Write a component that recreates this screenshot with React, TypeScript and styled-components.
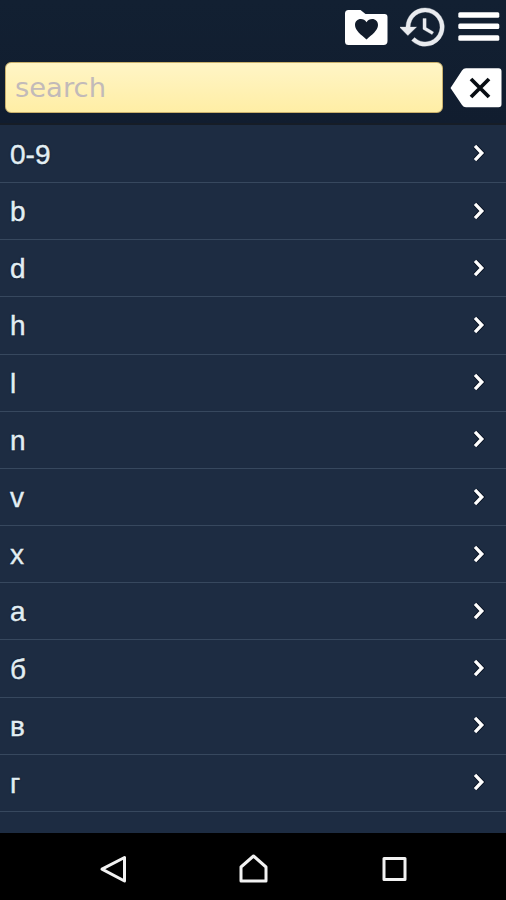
import React from "react";
import styled, { createGlobalStyle } from "styled-components";

const GlobalStyle = createGlobalStyle`
  * { box-sizing: border-box; }
  html, body, #root { height: 100%; }
  body { margin: 0; background: #000; overflow: hidden; }
  button { border: 0; padding: 0; background: none; display: block; color: inherit; }
  svg { display: block; }
`;

const Screen = styled.div`
  width: 100%;
  height: 900px;
  display: flex;
  flex-direction: column;
  background: #1d2c42;
  font-family: "Liberation Sans", Arial, sans-serif;
`;

const Header = styled.header`
  flex: none;
  height: 125px;
  background: linear-gradient(#122032, #111d2f);
  border-bottom: 2px solid #161d27;
`;

const Toolbar = styled.div`
  height: 62px;
  display: flex;
  justify-content: flex-end;
  align-items: flex-start;
  padding: 5px 5px 0 0;
  gap: 10px;
`;

const IconButton = styled.button<{ $width: number }>`
  width: ${(p) => p.$width}px;
  height: 46px;
`;

const SearchRow = styled.div`
  display: flex;
  align-items: center;
  padding: 0 4px 0 5px;
  gap: 7px;
`;

const SearchInput = styled.input`
  flex: 1;
  min-width: 0;
  height: 51px;
  border: 1px solid #c9b06c;
  border-radius: 6px;
  padding: 0 9px 1px;
  outline: none;
  background: linear-gradient(#fff5c6, #ffeea5);
  color: #333;
  font: 27.4px "DejaVu Sans", Verdana, sans-serif;
  &::placeholder { color: #c2bab9; opacity: 1; }
`;

const List = styled.ul`
  flex: 1;
  min-height: 0;
  margin: 0;
  padding: 0.8px 0 0;
  list-style: none;
  overflow: hidden;
`;

const Row = styled.li`
  height: 57.2px;
  display: flex;
  justify-content: space-between;
  align-items: center;
  padding: 0 20px 1px 10px;
  border-bottom: 1px solid #37485e;
  color: #e2eef3;
  font-size: 28px;
  line-height: 31px;
  -webkit-text-stroke: 0.4px #e2eef3;
  text-shadow: 0 0 2px #071020;
`;

const Label = styled.span`
  padding-top: 2px;
`;

const NavBar = styled.nav`
  flex: none;
  height: 67px;
  display: flex;
  justify-content: center;
  align-items: center;
  gap: 110px;
  padding: 4px 0 0 1px;
  background: #000;
  color: #f2f2f2;
`;

const entries = ["0-9", "b", "d", "h", "l", "n", "v", "x", "а", "б", "в", "г"];

const FavoritesIcon = () => (
  <svg width="44" height="46" viewBox="0 0 44 46" overflow="visible">
    <g transform="translate(-1.500)">
      <path fill="#fff" d="M4 5h12l5 4h19a3 3 0 0 1 3 3v24a4 4 0 0 1-4 4H4a3.500 3.500 0 0 1-3.500-3.500V8.500A3.500 3.500 0 0 1 4 5z" />
      <path fill="#111c2b" d="M22 34.500C17 30 10.500 25.500 10.500 20c0-3.500 2.500-6 5.800-6 2.300 0 4.400 1.200 5.700 3.200 1.300-2 3.400-3.200 5.700-3.200 3.300 0 5.800 2.500 5.800 6 0 5.500-6.500 10-11.500 14.500z" />
    </g>
  </svg>
);

const HistoryIcon = () => (
  <svg width="48" height="46" viewBox="0 0 48 46">
    <g fill="#e9ebef" stroke="#e9ebef" strokeWidth=".15" transform="translate(-2.600 -3.500) scale(2.130)">
      <path d="M13 3a9 9 0 0 0-9 9H1l3.900 4L9 12H6a7 7 0 1 1 2.060 4.940l-1.420 1.420A9 9 0 1 0 13 3z" />
      <path d="M12 8v5l4.280 2.540.720-1.210-3.500-2.080V8z" />
    </g>
  </svg>
);

const MenuIcon = () => (
  <svg width="43" height="46" viewBox="0 0 43 46" fill="#fff">
    <rect x="0.300" y="7.200" width="41" height="5.500" rx="1.500" />
    <rect x="0.300" y="18.500" width="41" height="5.500" rx="1.500" />
    <rect x="0.300" y="30.200" width="41" height="5.500" rx="1.500" />
  </svg>
);

const ClearIcon = () => (
  <svg width="52" height="46" viewBox="0 0 52 46">
    <path fill="#fff" d="M.5 23 12 5.500Q13.500 3.300 16 3.300h32.500a3 3 0 0 1 3 3v33a3 3 0 0 1-3 3H16q-2.500 0-4-2.300z" />
    <path d="m21 14 18 18m0-18-18 18" stroke="#080d12" strokeWidth="3.800" fill="none" />
  </svg>
);

const Chevron = () => (
  <svg width="14" height="20" viewBox="0 0 14 20">
    <path d="m3 2.900 6.800 7.100L3 17.100" fill="none" stroke="#071020" strokeWidth="5" />
    <path d="m3 2.900 6.800 7.100L3 17.100" fill="none" stroke="#fff" strokeWidth="3.300" />
  </svg>
);

const navIcons = [
  { label: "Back", d: "M27.500 4.500v23.500L5 16.200z" },
  { label: "Home", d: "M3 28V14L15.500 3 28 14v14z" },
  { label: "Recent", d: "M5 5.500h21v21H5z" },
];

export default function App() {
  return (
    <>
      <GlobalStyle />
      <Screen>
        <Header>
          <Toolbar>
            <IconButton $width={44} aria-label="Favorites"><FavoritesIcon /></IconButton>
            <IconButton $width={48} aria-label="History"><HistoryIcon /></IconButton>
            <IconButton $width={43} aria-label="Menu"><MenuIcon /></IconButton>
          </Toolbar>
          <SearchRow>
            <SearchInput placeholder="search" />
            <IconButton $width={52} aria-label="Clear"><ClearIcon /></IconButton>
          </SearchRow>
        </Header>
        <List>
          {entries.map((entry) => (
            <Row key={entry}>
              <Label>{entry}</Label>
              <Chevron />
            </Row>
          ))}
        </List>
        <NavBar>
          {navIcons.map(({ label, d }) => (
            <button key={label} aria-label={label}>
              <svg width="31" height="31" viewBox="0 0 31 31">
                <path d={d} fill="none" stroke="currentColor" strokeWidth="3" strokeLinejoin="round" />
              </svg>
            </button>
          ))}
        </NavBar>
      </Screen>
    </>
  );
}
